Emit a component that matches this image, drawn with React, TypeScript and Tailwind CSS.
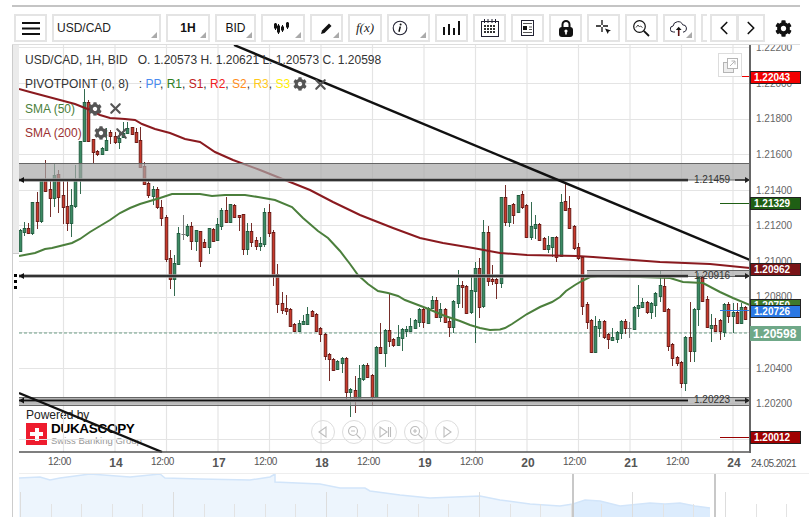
import React from "react";
import { FaCog } from "react-icons/fa";
import { ChevronLeft, ChevronRight, X } from "lucide-react";

// x, high, body top, body bottom, low, colour (0 green, 1 red, 2 doji)
type Candle = [number, number, number, number, number, number];

const candles: Candle[] = [
  [20, 229, 230, 251, 252, 0], [24, 222, 228, 232, 236, 0], [28, 223, 228, 233, 234, 1], [32, 202, 202, 233, 235, 0],
  [37, 192, 202, 221, 229, 1], [41, 180, 180, 221, 223, 0], [45, 160, 180, 191, 192, 1], [50, 180, 189, 198, 217, 1],
  [54, 164, 175, 198, 207, 0], [58, 170, 174, 197, 213, 1], [63, 181, 195, 207, 224, 1], [67, 181, 206, 223, 231, 1],
  [71, 189, 205, 223, 237, 0], [75, 165, 179, 206, 208, 0], [80, 141, 141, 180, 194, 0], [84, 89, 102, 141, 142, 0],
  [88, 100, 102, 141, 142, 1], [93, 139, 139, 152, 163, 1], [97, 150, 151, 154, 156, 1], [102, 147, 148, 154, 155, 0],
  [106, 128, 140, 150, 151, 0], [110, 130, 132, 136, 144, 1], [115, 132, 136, 142, 144, 1], [119, 133, 138, 142, 149, 0],
  [123, 122, 133, 137, 138, 0], [127, 122, 128, 133, 134, 0], [132, 127, 127, 134, 135, 1], [136, 128, 132, 142, 143, 1],
  [140, 127, 140, 167, 168, 1], [144, 162, 166, 184, 185, 1], [148, 180, 183, 195, 198, 1], [153, 186, 189, 196, 205, 0],
  [157, 187, 189, 207, 209, 1], [161, 200, 207, 218, 226, 1], [166, 215, 217, 259, 262, 1], [170, 250, 258, 279, 289, 1],
  [174, 255, 263, 279, 296, 0], [178, 227, 233, 264, 265, 0], [183, 215, 234, 234, 240, 2], [187, 224, 226, 235, 237, 0],
  [191, 222, 226, 241, 250, 1], [196, 230, 230, 241, 251, 0], [200, 231, 231, 261, 267, 1], [204, 239, 242, 247, 248, 1],
  [209, 228, 228, 247, 254, 0], [213, 228, 229, 241, 242, 1], [217, 218, 224, 240, 241, 0], [221, 208, 210, 226, 230, 0],
  [226, 197, 210, 222, 223, 1], [230, 204, 204, 222, 223, 0], [234, 204, 205, 217, 218, 1], [239, 215, 215, 217, 231, 1],
  [243, 214, 214, 249, 255, 1], [247, 223, 231, 249, 255, 0], [251, 223, 231, 242, 247, 1], [256, 237, 240, 246, 250, 1],
  [260, 237, 243, 246, 251, 0], [264, 208, 212, 244, 247, 0], [269, 204, 212, 233, 237, 1], [273, 230, 232, 275, 286, 1],
  [277, 264, 274, 304, 313, 1], [282, 292, 303, 310, 314, 1], [286, 295, 308, 311, 315, 1], [290, 308, 309, 326, 327, 1],
  [294, 323, 324, 331, 332, 1], [299, 320, 323, 331, 332, 0], [303, 315, 321, 324, 325, 0], [307, 307, 314, 324, 325, 0],
  [312, 310, 311, 316, 317, 1], [316, 313, 314, 331, 332, 1], [320, 327, 328, 334, 342, 1], [325, 333, 334, 356, 360, 1],
  [329, 353, 354, 359, 381, 1], [333, 358, 359, 370, 371, 1], [337, 360, 361, 369, 370, 0], [342, 357, 358, 363, 373, 0],
  [346, 357, 358, 392, 399, 1], [350, 388, 389, 392, 417, 0], [355, 376, 390, 399, 413, 1], [359, 365, 378, 400, 401, 0],
  [363, 364, 365, 379, 381, 0], [367, 363, 365, 377, 378, 1], [372, 374, 375, 397, 405, 1], [376, 346, 347, 397, 398, 0],
  [380, 323, 347, 353, 354, 1], [385, 329, 330, 353, 367, 0], [389, 293, 330, 341, 347, 1], [393, 338, 339, 345, 347, 1],
  [398, 325, 337, 345, 346, 0], [402, 328, 329, 338, 351, 0], [406, 326, 329, 331, 337, 0], [410, 318, 326, 331, 332, 0],
  [415, 319, 320, 328, 329, 0], [419, 308, 309, 322, 327, 0], [423, 308, 309, 322, 328, 1], [428, 307, 308, 323, 324, 0],
  [432, 296, 300, 308, 309, 0], [436, 297, 300, 317, 318, 1], [440, 303, 309, 317, 322, 0], [445, 308, 309, 322, 323, 1],
  [449, 318, 321, 327, 337, 1], [453, 300, 301, 327, 333, 0], [458, 270, 285, 303, 308, 0], [462, 281, 285, 287, 308, 1],
  [466, 285, 286, 313, 314, 1], [471, 275, 290, 312, 314, 0], [475, 262, 268, 291, 343, 0], [479, 258, 268, 307, 318, 1],
  [483, 220, 232, 306, 308, 0], [488, 226, 232, 281, 286, 1], [492, 265, 279, 281, 285, 1], [496, 278, 279, 283, 299, 1],
  [501, 197, 197, 283, 288, 0], [505, 185, 197, 222, 226, 1], [509, 205, 205, 222, 227, 0], [513, 203, 204, 215, 224, 1],
  [518, 195, 195, 212, 213, 0], [522, 191, 194, 207, 209, 1], [526, 204, 205, 237, 238, 1], [531, 202, 226, 237, 240, 0],
  [535, 215, 224, 228, 239, 0], [539, 223, 224, 240, 241, 1], [544, 237, 238, 249, 250, 1], [548, 236, 245, 249, 253, 0],
  [552, 237, 237, 247, 257, 0], [556, 236, 237, 257, 262, 1], [561, 194, 202, 256, 257, 0], [565, 183, 201, 210, 211, 1],
  [569, 196, 208, 228, 229, 1], [574, 225, 226, 248, 250, 1], [578, 243, 247, 258, 260, 1], [582, 256, 257, 306, 315, 1],
  [587, 302, 304, 322, 329, 1], [591, 319, 320, 352, 353, 1], [595, 316, 326, 352, 353, 0], [599, 319, 321, 328, 337, 0],
  [604, 320, 321, 337, 339, 1], [608, 333, 334, 339, 349, 1], [612, 328, 337, 340, 341, 0], [617, 331, 332, 339, 343, 0],
  [621, 320, 321, 333, 339, 0], [625, 319, 321, 328, 334, 1], [629, 322, 328, 328, 338, 2], [634, 306, 307, 329, 330, 0],
  [638, 285, 305, 308, 317, 0], [642, 298, 302, 307, 308, 0], [647, 301, 302, 312, 314, 1], [651, 302, 303, 312, 319, 0],
  [655, 292, 293, 305, 317, 0], [660, 271, 285, 296, 302, 0], [664, 277, 286, 311, 312, 1], [668, 308, 309, 346, 351, 1],
  [672, 343, 344, 358, 366, 1], [677, 356, 357, 363, 366, 1], [681, 361, 362, 383, 388, 1], [685, 336, 337, 383, 391, 0],
  [690, 302, 337, 351, 362, 1], [694, 308, 309, 351, 362, 0], [698, 273, 277, 309, 326, 0], [702, 275, 277, 301, 302, 1],
  [707, 296, 299, 327, 328, 1], [711, 314, 325, 328, 342, 0], [715, 318, 325, 331, 332, 1], [720, 319, 320, 331, 340, 1],
  [724, 303, 304, 332, 337, 0], [728, 302, 304, 316, 323, 1], [733, 303, 312, 316, 333, 0], [737, 303, 312, 323, 324, 1],
  [741, 303, 307, 323, 324, 0], [745, 306, 307, 319, 320, 1],
];

const sma50 =
  "19,256 35,253 45,249 52,248 60,246 72,243 80,239 90,232 100,226 110,220 120,213 130,208 140,204 150,201 160,198 172,194 185,194 200,194 212,196 225,195 245,195 258,197 275,200 292,207 303,218 318,231 328,238 340,251 350,264 358,275 368,284 378,291 388,293 398,296 405,300 426,308 445,316 460,321 470,325 480,328 490,330 500,329.5 505,328 512,324 527,314 540,307 552,302 560,297 566,291 575,285 582,281 590,277 600,276 640,277 670,278 683,282 703,283 720,292 733,298 750,305";
const sma200 =
  "19,89 30,92 45,96 60,100 75,104 90,110 100,115 110,118 125,119 135,120 142,124 155,129 170,133 185,139 200,142 215,152 233,160 260,170 285,180 310,190 333,202 360,215 393,228 420,238 443,243 473,248 500,253 527,255 577,256 593,257 660,262 710,264 750,268";
const overview =
  "19,478 40,477 50,480 60,478 90,474 130,477 160,474 165,478 200,479 250,480 270,477 275,474 275,482 320,484 340,488 365,488 370,491 400,495 430,498 480,496 500,500 530,504 560,506 573,504 585,500 600,501 620,506 650,503 665,504 680,503 695,506 710,508";

const gridX = [63.5, 115, 166.5, 218, 269.5, 321, 372.5, 424, 475.5, 527, 578.5, 630, 681.5, 733];
const gridY = [47.5, 83.5, 119.5, 154.5, 190.5, 225.5, 261.5, 297.5, 332.5, 368.5, 403.5, 439.5];
const prices = ["1.22200", "1.22000", "1.21800", "1.21600", "1.21400", "1.21200", "1.21000", "1.20800", "1.20600", "1.20400", "1.20200", "1.20000"];
const times = ["12:00", "14", "12:00", "17", "12:00", "18", "12:00", "19", "12:00", "20", "12:00", "21", "12:00", "24"];

const Corner = () => (
  <span className="absolute right-[2px] bottom-[2px] w-0 h-0 border-l-[6px] border-b-[6px] border-l-transparent border-b-[#aaaaaa]" />
);

const ToolButton = ({ className, children, menu }: { className: string; children?: React.ReactNode; menu?: boolean }) => (
  <div className={`relative h-[28px] shrink-0 border-2 border-[#e4e4e4] bg-white flex items-center justify-center ${className}`}>
    {children}
    {menu && <Corner />}
  </div>
);

const Level = ({ y, bandTop, bandBottom, from = 19 }: { y: number; bandTop?: number; bandBottom?: number; from?: number }) => (
  <g>
    {bandTop !== undefined && bandBottom !== undefined && (
      <>
        <rect x={from} y={bandTop} width={750 - from} height={bandBottom - bandTop} fill="#a8a8a8" fillOpacity="0.7" />
        <line x1={from} x2={750} y1={bandTop} y2={bandTop} stroke="#666" strokeWidth="1" />
        <line x1={from} x2={750} y1={bandBottom} y2={bandBottom} stroke="#666" strokeWidth="1" />
      </>
    )}
    <line x1={19} x2={688} y1={y} y2={y} stroke="#999" strokeWidth="3.5" />
    <line x1={19} x2={688} y1={y} y2={y} stroke="#111" strokeWidth="1.6" />
    <line x1={735} x2={746} y1={y} y2={y} stroke="#333" strokeWidth="1.6" />
    <polygon points={`19,${y} 24,${y - 3} 24,${y + 3}`} fill="#111" />
    <polygon points={`750,${y} 745,${y - 3} 745,${y + 3}`} fill="#222" />
  </g>
);

const ChartDrawing = () => (
  <svg viewBox="19 45 731 408" className="absolute inset-0 w-[731px] h-[408px]">
    {gridX.map((x) => (
      <line key={x} x1={x} x2={x} y1={45} y2={452} stroke="#e4e4e4" strokeWidth="1.2" />
    ))}
    {gridY.map((y) => (
      <line key={y} x1={19} x2={750} y1={y} y2={y} stroke="#e4e4e4" strokeWidth="1.2" />
    ))}
    <line x1={19} x2={750} y1={333} y2={333} stroke="#6f9f88" strokeWidth="1" strokeDasharray="3 2" />
    {candles.map(([x, hi, top, bot, lo, c]) => {
      const cx = x + 0.5;
      if (c === 2) {
        return (
          <g key={x} stroke="#777" strokeWidth="1">
            <line x1={cx} x2={cx} y1={hi} y2={lo} />
            <line x1={cx - 2} x2={cx + 2} y1={top + 0.5} y2={top + 0.5} />
          </g>
        );
      }
      const edge = c === 0 ? "#1d5a3c" : "#661612";
      return (
        <g key={x}>
          <line x1={cx} x2={cx} y1={hi} y2={lo} stroke={edge} strokeWidth="0.9" />
          <rect x={cx - 1.3} y={top + 0.5} width={2.6} height={Math.max(bot - top, 1)} fill={c === 0 ? "#3b8a63" : "#c8382a"} stroke={edge} strokeWidth="0.9" />
        </g>
      );
    })}
    <polyline points={sma200} fill="none" stroke="#8a1a1f" strokeWidth="2" />
    <polyline points={sma50} fill="none" stroke="#4b7f3c" strokeWidth="2" />
    <Level y={180} bandTop={163.5} bandBottom={180} />
    <Level y={276} bandTop={270.5} bandBottom={276.5} from={587} />
    <Level y={400.5} bandTop={397.5} bandBottom={405.5} />
    <line x1={234} x2={750} y1={45} y2={260} stroke="#111" strokeWidth="2.4" />
    <line x1={19} x2={162} y1={393} y2={452} stroke="#111" strokeWidth="2.4" />
    <line x1={720} x2={750} y1={76.5} y2={76.5} stroke="#f00000" strokeWidth="1" />
    <line x1={720} x2={750} y1={203.5} y2={203.5} stroke="#1f5f14" strokeWidth="1" />
    <line x1={720} x2={750} y1={310.5} y2={310.5} stroke="#2b78e4" strokeWidth="1" />
    <line x1={720} x2={750} y1={437.5} y2={437.5} stroke="#990000" strokeWidth="1" />
    <line x1={19} x2={750} y1={452} y2={452} stroke="#555" strokeWidth="1.5" />
  </svg>
);

const NavCircle = ({ children }: { children: React.ReactNode }) => (
  <div className="w-[24px] h-[24px] rounded-full border border-[#dddddd] flex items-center justify-center">
    <svg viewBox="0 0 16 16" className="w-[16px] h-[16px]" fill="none" stroke="#bdbdbd" strokeWidth="1.1">
      {children}
    </svg>
  </div>
);

const Tag = ({ className, children }: { className: string; children: string }) => (
  <div className={`absolute -left-[1px] w-[51px] flex items-center pl-[3px] font-bold text-white ${className}`}>{children}</div>
);

export default function App() {
  return (
    <div className="w-[809px] h-[517px] bg-white overflow-hidden font-['Liberation_Sans',Arial,sans-serif]">
      <div className="h-[2px] mt-[5px] ml-[12px] w-[788px] bg-[#c4c4c4]" />

      {/* toolbar */}
      <div className="flex items-center gap-[5px] mt-[7px] ml-[14px] h-[28px]">
        <ToolButton className="w-[33px]">
          <svg width="18" height="13" viewBox="0 0 18 13" fill="#111">
            <rect y="0" width="18" height="2" />
            <rect y="5.5" width="18" height="2" />
            <rect y="11" width="18" height="2" />
          </svg>
        </ToolButton>
        <ToolButton className="w-[109px] !justify-start pl-[3px] text-[12px] text-[#222]" menu>
          USD/CAD
        </ToolButton>
        <ToolButton className="w-[44px] text-[12px] font-bold text-[#111]" menu>
          1H
        </ToolButton>
        <ToolButton className="w-[41px] text-[12px] text-[#111]" menu>
          BID
        </ToolButton>
        <ToolButton className="w-[44px] !justify-start pl-[11px]" menu>
          <svg width="16" height="14" viewBox="0 0 16 14" stroke="#111" fill="#111">
            <path d="M1.5 2v7M4.5 3v10M8.5 4v7M13.5 1v7" strokeWidth="1" />
            <rect x="0.5" y="3" width="2" height="4" />
            <rect x="3.5" y="5" width="2" height="6" />
            <rect x="7.5" y="6" width="2" height="3" />
            <rect x="12.5" y="2" width="2" height="4" />
          </svg>
        </ToolButton>
        <ToolButton className="w-[33px] !justify-start pl-[8px]" menu>
          <svg width="13" height="13" viewBox="0 0 13 13">
            <path d="M1 12l1-3.5 7-7 2.5 2.500-7 7z" fill="#111" />
          </svg>
        </ToolButton>
        <ToolButton className="w-[34px] font-['Liberation_Serif',serif] italic text-[13px] text-[#222]">f(x)</ToolButton>
        <ToolButton className="w-[43px] !justify-start pl-[3px]" menu>
          <svg width="16" height="16" viewBox="0 0 16 16" fill="none">
            <circle cx="8" cy="8" r="6.800" stroke="#223" strokeWidth="1.100" />
            <circle cx="8.600" cy="4.500" r="1" fill="#111" />
            <path d="M8.300 6.500L7 11.800" stroke="#111" strokeWidth="1.500" />
          </svg>
        </ToolButton>
        <ToolButton className="w-[33px]">
          <svg width="17" height="14" viewBox="0 0 17 14" fill="#111">
            <rect x="0" y="6" width="2" height="8" />
            <rect x="5" y="3" width="2" height="11" />
            <rect x="10" y="7" width="2" height="7" />
            <rect x="15" y="0" width="2" height="14" />
          </svg>
        </ToolButton>
        <ToolButton className="w-[33px]">
          <svg width="18" height="18" viewBox="0 0 18 18" fill="none" stroke="#223">
            <rect x="0.500" y="2.500" width="17" height="15" />
            <path d="M3.500 0v4M7 0v4M11 0v4M14.500 0v4" />
            <path d="M3 7h12M3 10h12M3 13h12" strokeWidth="2" strokeDasharray="2 1" stroke="#333" />
          </svg>
        </ToolButton>
        <ToolButton className="w-[33px]">
          <svg width="13" height="16" viewBox="0 0 13 16" fill="none" stroke="#223">
            <rect x="0.500" y="0.500" width="12" height="15" />
            <path d="M2 3.500h9M8 7h3M8 9.500h3M2 12.500h9" stroke="#555" />
            <rect x="2" y="6" width="4" height="4" fill="#111" stroke="none" />
          </svg>
        </ToolButton>
        <ToolButton className="w-[33px]">
          <svg width="14" height="17" viewBox="0 0 14 17">
            <path d="M3.500 8V4.500a3.500 3.500 0 0 1 7 0V8" fill="none" stroke="#111" strokeWidth="2" />
            <rect x="0" y="7" width="14" height="10" rx="3" fill="#111" />
            <circle cx="7" cy="11" r="1.600" fill="#fff" />
            <rect x="6.200" y="11" width="1.600" height="3.500" fill="#fff" />
          </svg>
        </ToolButton>
        <ToolButton className="w-[33px]">
          <svg width="16" height="16" viewBox="0 0 16 16">
            <path d="M6 0v5M6 7v5M0 6h5M7 6h5" stroke="#111" strokeWidth="1.300" fill="none" />
            <path d="M9 8.500l6 2-2.300 1 -.9 2.500z" fill="#111" />
          </svg>
        </ToolButton>
        <ToolButton className="w-[33px]">
          <svg width="17" height="17" viewBox="0 0 17 17" fill="none" stroke="#111">
            <circle cx="6.500" cy="6.500" r="5.800" strokeWidth="1.200" />
            <path d="M10.800 10.800L16 16" strokeWidth="1.800" />
            <path d="M3 7.500l2-2.500 1.500 2 1-1 2 1.500" stroke="#444" />
          </svg>
        </ToolButton>
        <ToolButton className="w-[33px] !justify-start pl-[5px]" menu>
          <svg width="18" height="16" viewBox="0 0 18 16" fill="none">
            <path d="M5 12H3.500a3 3 0 0 1-.4-6 5 5 0 0 1 9.600-1.200A3.700 3.700 0 0 1 14 12h-1" stroke="#223" />
            <path d="M8.700 16V8.500" stroke="#5a0f0f" strokeWidth="1.600" />
            <path d="M5.800 10l2.900-3.200 2.900 3.200z" fill="#111" />
          </svg>
        </ToolButton>
        <div className="w-[6px] h-[28px] shrink-0 border-2 border-r-0 border-[#e4e4e4]" />
        <div className="flex -ml-[2px] shrink-0">
          <ToolButton className="w-[28px]">
            <ChevronLeft size={22} strokeWidth={1.800} color="#111" />
          </ToolButton>
          <ToolButton className="w-[28px] -ml-[1px]">
            <ChevronRight size={22} strokeWidth={1.800} color="#111" />
          </ToolButton>
        </div>
        <FaCog className="ml-[5px] shrink-0 text-[#111]" size={17} />
      </div>

      <div className="h-px mt-[2px] ml-[12px] w-[788px] bg-[#dddddd]" />

      {/* chart area */}
      <div className="flex ml-[12px] h-[472px] border-l border-[#cccccc]">
        <div className="relative w-[6px] shrink-0">
          <div className="h-[209px] bg-[#ebebeb] border-b border-[#cccccc]" />
          <div className="absolute left-[1px] top-[229px] flex flex-col gap-[3px]">
            <div className="w-[3px] h-[3px] bg-black" />
            <div className="w-[3px] h-[3px] bg-black" />
            <div className="w-[3px] h-[3px] bg-black" />
          </div>
        </div>

        <div className="w-[790px] shrink-0">
          <div className="flex h-[408px]">
            <div className="relative w-[731px] shrink-0 text-[12px] text-[#333333]">
              {/* sits under the drawing so the trend line crosses it */}
              <div className="absolute left-[7px] top-[364px] text-[#222222]">
                <div className="leading-[13px]">Powered by</div>
                <div className="flex items-center mt-[0px]">
                  <div className="relative w-[21px] h-[22px] bg-[#ee1c2e] flex items-center justify-center">
                    <div className="absolute w-[13px] h-[4px] bg-white" />
                    <div className="absolute w-[4px] h-[13px] bg-white" />
                  </div>
                  <div className="ml-[4px]">
                    <div className="font-bold text-[13.500px] leading-[13px] text-black tracking-[-0.3px]">DUKASCOPY</div>
                    <div className="text-[9.500px] leading-[11px] text-[#999999]">Swiss Banking Group</div>
                  </div>
                </div>
              </div>

              <ChartDrawing />

              <div className="absolute left-[6px] top-[3px] flex flex-col">
                <div className="h-[24.300px] flex items-center whitespace-nowrap">
                  USD/CAD, 1H, BID
                  <span className="ml-[10px]">O. 1.20573 H. 1.20621 L. 1.20573 C. 1.20598</span>
                </div>
                <div className="h-[24.300px] flex items-center whitespace-nowrap">
                  PIVOTPOINT (0, 8)
                  <span className="ml-[10px]">
                    : <span className="text-[#4a8cf0]">PP</span>, <span className="text-[#2e7d1f]">R1</span>, <span className="text-[#c02020]">S1</span>,{" "}
                    <span className="text-[#f02020]">R2</span>, <span className="text-[#ff8c1a]">S2</span>, <span className="text-[#ffc81a]">R3</span>,{" "}
                    <span className="text-[#ffee00]">S3</span>
                  </span>
                  <FaCog className="ml-[3px] text-[#555555]" size={14} />
                  <X className="ml-[5px] text-[#555555]" size={17} strokeWidth={3} />
                </div>
                <div className="h-[24.300px] flex items-center whitespace-nowrap text-[#4b7f3c]">
                  SMA (50)
                  <FaCog className="ml-[13px] text-[#555555]" size={14} />
                  <X className="ml-[5px] text-[#555555]" size={17} strokeWidth={3} />
                </div>
                <div className="h-[24.300px] flex items-center whitespace-nowrap text-[#9a3030]">
                  SMA (200)
                  <FaCog className="ml-[12px] text-[#555555]" size={14} />
                  <X className="ml-[5px] text-[#555555]" size={17} strokeWidth={3} />
                </div>
              </div>

              {/* level captions */}
              <div className="absolute left-[675px] top-[129px] text-[10px] leading-[12px]">1.21459</div>
              <div className="absolute left-[675px] top-[225px] text-[10px] leading-[12px]">1.20916</div>
              <div className="absolute left-[675px] top-[349px] text-[10px] leading-[12px]">1.20223</div>

              <div className="absolute left-[699px] top-[8px] w-[24px] h-[24px] border border-[#dddddd] bg-white flex items-center justify-center">
                <svg width="15" height="15" viewBox="0 0 15 15" fill="none" stroke="#b5b5b5">
                  <rect x="0.500" y="4.500" width="10" height="10" fill="#eeeeee" />
                  <rect x="4.500" y="0.500" width="10" height="10" fill="#ffffff" />
                  <path d="M7 8l5-5M8.500 3H12v3.500" />
                </svg>
              </div>

              <div className="absolute left-[292px] top-[375px] flex gap-[7px]">
                <NavCircle>
                  <path d="M11 3v10L4 8z" />
                </NavCircle>
                <NavCircle>
                  <circle cx="7" cy="7" r="4.500" />
                  <path d="M10.300 10.300L14.500 14.500M5 7h4" />
                </NavCircle>
                <NavCircle>
                  <path d="M3 3v10l7-5zM11.500 3v10M13.500 3v10" />
                </NavCircle>
                <NavCircle>
                  <circle cx="7" cy="7" r="4.500" />
                  <path d="M10.300 10.300L14.500 14.500M5 7h4M7 5v4" />
                </NavCircle>
                <NavCircle>
                  <path d="M5 3v10l7-5z" />
                </NavCircle>
              </div>
            </div>

            {/* price axis */}
            <div className="relative w-[59px] shrink-0 border-l-2 border-[#666666] -ml-px">
              <div className="h-full overflow-hidden">
                <div className="-mt-[15px] pl-[5px]">
                  {prices.map((p) => (
                    <div key={p} className="h-[35.600px] flex items-center text-[10px] text-[#666666]">
                      {p}
                    </div>
                  ))}
                </div>
              </div>
              <Tag className="top-[26px] h-[13px] bg-[#f20000] border border-[#222222] text-[10px]">1.22043</Tag>
              <Tag className="top-[152px] h-[13px] bg-[#1f5f14] border border-[#222222] text-[10px]">1.21329</Tag>
              <Tag className="top-[218px] h-[13px] bg-[#7a1418] border border-[#222222] text-[10px]">1.20962</Tag>
              <Tag className="top-[254px] h-[13px] bg-[#3f7a2c] border border-[#222222] text-[10px]">1.20750</Tag>
              <Tag className="top-[260px] h-[13px] bg-[#2b78e4] border border-[#222222] text-[10px]">1.20726</Tag>
              <Tag className="top-[281px] h-[15px] bg-[#6fa888] text-[12px]">1.20598</Tag>
              <Tag className="top-[386px] h-[13px] bg-[#a00000] border border-[#222222] text-[10px]">1.20012</Tag>
            </div>
          </div>

          {/* time axis */}
          <div className="flex h-[20px] items-center text-[#555555]">
            <div className="w-[731px] shrink-0 flex pl-[18.750px]">
              {times.map((t, i) =>
                t === "12:00" ? (
                  <div key={i} className="w-[51.500px] shrink-0 flex justify-center pr-[8px] text-[10px] tracking-[-0.4px]">
                    {t}
                  </div>
                ) : (
                  <div key={i} className="w-[51.500px] shrink-0 flex justify-center pl-[2px] text-[12px] font-bold">
                    {t}
                  </div>
                ),
              )}
            </div>
            <div className="pl-[1px] text-[10px] tracking-[-0.5px] whitespace-nowrap">24.05.2021</div>
          </div>

          {/* overview strip */}
          <div className="h-[44px] border-t border-[#eeeeee]">
            <svg viewBox="19 474 790 43" className="w-[790px] h-[43px]">
              <polygon points={`${overview} 710,517 19,517`} fill="#edf5fd" />
              <clipPath id="range">
                <rect x="573" y="474" width="142" height="43" />
              </clipPath>
              <polygon points={`${overview} 710,517 19,517`} fill="#dcecfd" clipPath="url(#range)" />
              <polyline points={overview} fill="none" stroke="#d2e5fa" strokeWidth="1.500" />
              {[20, 173, 326, 479, 632, 725].map((x) => (
                <line key={x} x1={x + 0.5} x2={x + 0.5} y1={492} y2={517} stroke="#dddddd" />
              ))}
              {[51, 81, 112, 142, 204, 234, 265, 295, 357, 387, 418, 448, 510, 540, 571, 601, 663, 693, 756, 786].map((x) => (
                <line key={x} x1={x + 0.5} x2={x + 0.5} y1={504} y2={517} stroke="#e3e3e3" />
              ))}
              <line x1={573} x2={573} y1={472} y2={517} stroke="#c8c8c8" strokeWidth="2" />
              <line x1={715} x2={715} y1={472} y2={517} stroke="#c8c8c8" strokeWidth="2" />
            </svg>
          </div>
        </div>
      </div>
    </div>
  );
}
